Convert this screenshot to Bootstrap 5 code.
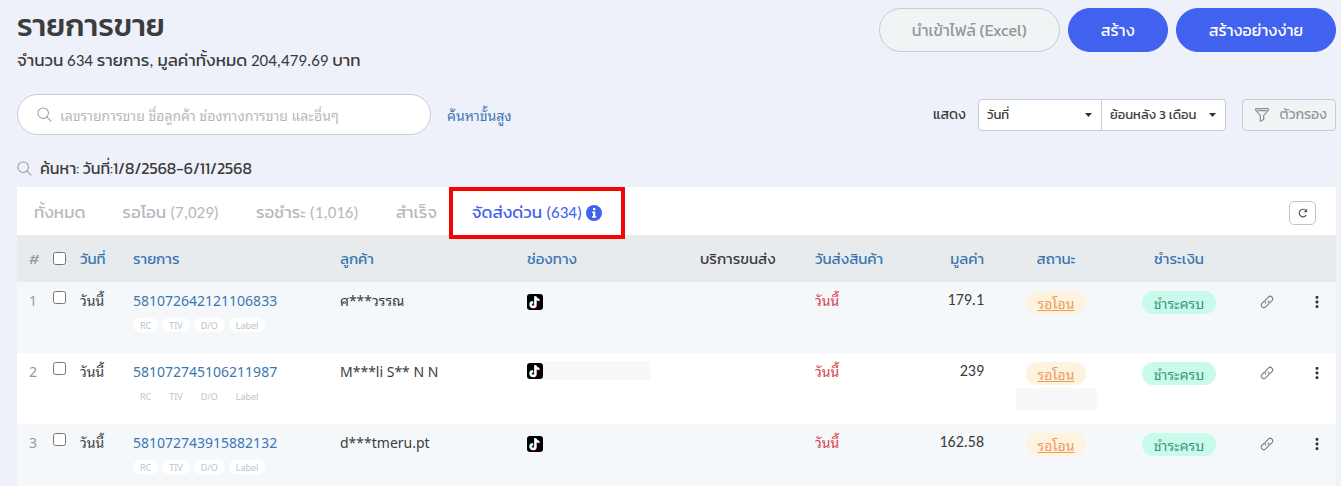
<!DOCTYPE html>
<html lang="th">
<head>
<meta charset="utf-8">
<meta name="viewport" content="width=device-width, initial-scale=1">
<title>รายการขาย</title>
<link href="https://cdn.jsdelivr.net/npm/bootstrap@5.3.0/dist/css/bootstrap.min.css" rel="stylesheet">
<style>
:root{--head:Kanit,"Noto Sans Thai","Noto Sans",sans-serif;--mix:Carlito,Lato,Kanit,"Noto Sans Thai","Noto Sans",sans-serif;--loop:"Noto Sans Thai Looped","Noto Sans",sans-serif}
body{background:#eef1fa;color:#3c3c3c;font-family:var(--loop);font-size:14px;line-height:20px}
a{color:#3a76b1;text-decoration:none}
.page{padding:8px 5px 0 17px}
.page-title{font-family:var(--head);font-size:31px;line-height:34px;font-weight:500;margin:0 0 8px}
.summary{font-family:var(--mix);font-size:17px;line-height:22px}
.pill-btn{height:44px;border-radius:22px;font-family:var(--head);font-size:16px;line-height:20px;padding:0 32px}
.btn-plain{background:#f1f4f5;border:1px solid #c8cbd3;color:#92979c;font-family:var(--head)}
.btn-blue{background:#4062ee;border-color:#4062ee;color:#fff}
.tools{margin-top:22px}
.search-box{width:414px;height:41px;border:1px solid #c8cbd3;border-radius:21px;background:#fff;padding:0 19px;gap:8px}
.search-box input{border:0;outline:0;background:none;font-size:14px;color:#3c3c3c;padding:0}
.search-box input::placeholder{color:#b4b8bd;opacity:1}
.show-by{font-family:var(--head)}
.pick{height:32px;border:1px solid #c8cbd3;background:#fff;font-family:var(--head);font-size:13px;color:#3c3c3c;appearance:none;padding:0 24px 0 8px;width:124px}
.pick-wrap{position:relative}
.pick-wrap svg{position:absolute;right:10px;top:14px;pointer-events:none}
.pick-first{border-radius:4px 0 0 4px}
.pick-last{border-radius:0 4px 4px 0;border-left:0}
.filter-btn{height:32px;width:94px;border-radius:4px;font-size:14px;padding:0 8px 0 12px}
.found{font-family:var(--head);font-size:16px;line-height:22px;margin:22px 0 8px}
.panel{background:#fff}
.tabs{height:48px;padding:3px 20px 0 17px;font-family:var(--mix)}
.tabs a{font-size:17px;color:#b5b9be;margin-right:37px}
.tabs a:nth-child(4){margin-right:12px}
.tabs .tab-now{height:52px;width:176px;border:4px solid #f40505;color:#4062ee;margin:0;position:relative;z-index:1}
.reload{width:27px;height:24px;border:1px solid #c4c4c8;border-radius:5px;background:#fff;padding:0}
.sales{width:100%;table-layout:fixed;border-collapse:collapse}
.sales th{height:47px;background:#e8ebee;font-family:var(--head);font-weight:400;font-size:15px;vertical-align:middle;padding:0}
.sales td{height:71px;vertical-align:top;padding:8px 0 0}
.sales tbody tr{background:#f5f8fb}
.sales tbody tr:nth-child(2){background:#fff}
.sales .num{padding-left:12px;color:#969a9e}
.sales input{width:13px;height:13px;margin:0;display:block;border:1px solid #767676;border-radius:3px}
.sales td input{margin-top:1px}
.sales td:last-child{padding-right:6px}
.no,.who{font-size:14px}
.sales .sum{font-family:Carlito,Lato,sans-serif;font-size:16px}
.late{color:#d9414b}
.chip{font-size:9px;line-height:14px;color:#bcc2c7;background:#fff;border-radius:7px;padding:0 7px}
.state{display:inline-block;height:23px;line-height:23px;border-radius:12px;padding:0 12px;margin-top:1px}
.wait{background:#fef3de;color:#ec9a60;text-decoration:underline}
.paid{background:#c8fbec;color:#3f9377}
.blank{background:#f7f8fa}
.blank-shop{width:107px;height:19px}
.blank-state{width:81px;height:23px;margin-top:3px}
</style>
<script src="https://cdn.jsdelivr.net/npm/bootstrap@5.3.0/dist/js/bootstrap.bundle.min.js"></script>
</head>
<body>
<svg class="d-none">
<symbol id="lens" viewBox="0 0 16 16"><g fill="none" stroke="#9a9fa6" stroke-width="1.1" stroke-linecap="round"><circle cx="6.6" cy="6.6" r="5.6"/><path d="M10.7 10.7 15 15"/></g></symbol>
<symbol id="caret" viewBox="0 0 7 4"><path d="M0 0h7L3.5 4z" fill="#333"/></symbol>
<symbol id="tiktok" viewBox="0 0 16 16"><rect width="16" height="16" rx="3" fill="#000"/><g fill="none" stroke-width="2"><path d="M8.500 2.300v8.200a2.400 2.400 0 1 1-2.400-2.400M8.500 2.300c.2 2.300 1.700 3.400 3.800 3.400" stroke="#25f4ee" transform="translate(-.5 -.2)"/><path d="M8.500 2.300v8.200a2.400 2.400 0 1 1-2.400-2.400M8.500 2.300c.2 2.300 1.700 3.400 3.800 3.400" stroke="#fe2c55" transform="translate(.5 .6)"/><path d="M8.500 2.300v8.200a2.400 2.400 0 1 1-2.400-2.400M8.500 2.300c.2 2.300 1.700 3.400 3.800 3.400" stroke="#fff" transform="translate(0 .2)"/></g></symbol>
<symbol id="chain" viewBox="0 0 16 16"><g fill="none" stroke="#777" stroke-width="1.200" stroke-linecap="round"><path d="M6.700 9.300a2.900 2.900 0 0 1 0-4.100l2.900-2.900a2.900 2.900 0 0 1 4.100 4.100l-2.300 2.300"/><path d="M9.300 6.700a2.900 2.900 0 0 1 0 4.100l-2.900 2.900a2.900 2.900 0 0 1-4.100-4.100l2.300-2.300"/></g></symbol>
<symbol id="dots" viewBox="0 0 4 12"><g fill="#333"><rect x=".6" y="0" width="2.800" height="2.800" rx=".8"/><rect x=".6" y="4.600" width="2.800" height="2.800" rx=".8"/><rect x=".6" y="9.200" width="2.800" height="2.800" rx=".8"/></g></symbol>
</svg>
<main class="page vh-100 overflow-hidden">
<header class="d-flex justify-content-between align-items-start">
<div><h1 class="page-title">รายการขาย</h1><div class="summary">จำนวน 634 รายการ, มูลค่าทั้งหมด 204,479.69 บาท</div></div>
<div class="d-flex gap-2">
<button class="btn pill-btn btn-plain">นำเข้าไฟล์ (Excel)</button>
<button class="btn pill-btn btn-blue">สร้าง</button>
<button class="btn pill-btn btn-blue">สร้างอย่างง่าย</button>
</div>
</header>
<div class="tools d-flex justify-content-between align-items-center">
<div class="d-flex align-items-center">
<label class="search-box d-flex align-items-center"><svg width="15" height="15"><use href="#lens"/></svg><input class="flex-grow-1" type="text" aria-label="ค้นหา" placeholder="เลขรายการขาย ชื่อลูกค้า ช่องทางการขาย และอื่นๆ"></label>
<a href="#" class="ms-3">ค้นหาขั้นสูง</a>
</div>
<div class="d-flex align-items-center">
<label for="by" class="show-by me-2">แสดง</label>
<div class="pick-wrap ms-1"><select id="by" class="pick pick-first"><option>วันที่</option></select><svg width="7" height="4"><use href="#caret"/></svg></div>
<div class="pick-wrap"><select class="pick pick-last" aria-label="ช่วงเวลา"><option>ย้อนหลัง 3 เดือน</option></select><svg width="7" height="4"><use href="#caret"/></svg></div>
<button class="btn btn-plain filter-btn ms-3 d-flex align-items-center justify-content-between"><svg width="14" height="14" viewBox="0 0 14 14" fill="none" stroke="#888e94" stroke-width="1.200" stroke-linejoin="round"><path d="M.7.700h12.600v1.600L8.700 7.400v4L5.300 13.300V7.400L.7 2.300zM2.500 2.700h9"/></svg>ตัวกรอง</button>
</div>
</div>
<div class="found d-flex align-items-center gap-2"><svg width="15" height="15"><use href="#lens"/></svg>ค้นหา: วันที่:1/8/2568-6/11/2568</div>
<section class="panel">
<nav class="tabs d-flex align-items-center">
<a href="#">ทั้งหมด</a><a href="#">รอโอน (7,029)</a><a href="#">รอชำระ (1,016)</a><a href="#">สำเร็จ</a>
<a href="#" class="tab-now d-flex align-items-center justify-content-center gap-1">จัดส่งด่วน (634)<svg width="16" height="16" viewBox="0 0 16 16"><circle cx="8" cy="8" r="8" fill="#4062ee"/><path d="M7 3h2.300v2.200H7zM6.200 6.500h3.100v4.700h1v1.500H6v-1.500h1V8h-.8z" fill="#fff"/></svg></a>
<button class="reload ms-auto d-flex align-items-center justify-content-center" aria-label="โหลดใหม่"><svg width="10" height="10" viewBox="0 0 10 10"><path d="M8.200 7.200A3.800 3.800 0 1 1 7.900 2.500" fill="none" stroke="#555" stroke-width="1.200"/><path d="M9.200.700v3.600H5.700z" fill="#555"/></svg></button>
</nav>
<table class="sales">
<colgroup><col style="width:36px"><col style="width:27px"><col style="width:53px"><col style="width:207px"><col style="width:187px"><col><col style="width:115px"><col style="width:90px"><col style="width:79px"><col style="width:144px"><col style="width:102px"><col style="width:74px"><col style="width:32px"></colgroup>
<thead><tr><th class="num">#</th><th><input type="checkbox" aria-label="เลือกทั้งหมด"></th><th><a href="#">วันที่</a></th><th><a href="#">รายการ</a></th><th><a href="#">ลูกค้า</a></th><th><a href="#">ช่องทาง</a></th><th>บริการขนส่ง</th><th><a href="#">วันส่งสินค้า</a></th><th class="text-end"><a href="#">มูลค่า</a></th><th class="text-center"><a href="#">สถานะ</a></th><th class="text-center"><a href="#">ชำระเงิน</a></th><th></th><th></th></tr></thead>
<tbody>
<tr><td class="num">1</td><td><input type="checkbox" aria-label="เลือก 1"></td><td>วันนี้</td><td><a href="#" class="no">581072642121106833</a><div class="d-flex gap-1 mt-2"><span class="chip">RC</span><span class="chip">TIV</span><span class="chip">D/O</span><span class="chip">Label</span></div></td><td class="who">ศ***วรรณ</td><td><svg width="16" height="16"><use href="#tiktok"/></svg></td><td></td><td class="late">วันนี้</td><td class="sum text-end">179.1</td><td class="text-center"><a href="#" class="state wait">รอโอน</a></td><td class="text-center"><span class="state paid">ชำระครบ</span></td><td class="text-center"><svg width="14" height="14"><use href="#chain"/></svg></td><td class="text-center"><svg width="4" height="12"><use href="#dots"/></svg></td></tr>
<tr><td class="num">2</td><td><input type="checkbox" aria-label="เลือก 2"></td><td>วันนี้</td><td><a href="#" class="no">581072745106211987</a><div class="d-flex gap-1 mt-2"><span class="chip">RC</span><span class="chip">TIV</span><span class="chip">D/O</span><span class="chip">Label</span></div></td><td class="who">M***li S** N N</td><td><div class="d-flex align-items-center"><svg width="16" height="16"><use href="#tiktok"/></svg><span class="blank blank-shop"></span></div></td><td></td><td class="late">วันนี้</td><td class="sum text-end">239</td><td class="text-center"><a href="#" class="state wait">รอโอน</a><div class="blank blank-state mx-auto"></div></td><td class="text-center"><span class="state paid">ชำระครบ</span></td><td class="text-center"><svg width="14" height="14"><use href="#chain"/></svg></td><td class="text-center"><svg width="4" height="12"><use href="#dots"/></svg></td></tr>
<tr><td class="num">3</td><td><input type="checkbox" aria-label="เลือก 3"></td><td>วันนี้</td><td><a href="#" class="no">581072743915882132</a><div class="d-flex gap-1 mt-2"><span class="chip">RC</span><span class="chip">TIV</span><span class="chip">D/O</span><span class="chip">Label</span></div></td><td class="who">d***tmeru.pt</td><td><svg width="16" height="16"><use href="#tiktok"/></svg></td><td></td><td class="late">วันนี้</td><td class="sum text-end">162.58</td><td class="text-center"><a href="#" class="state wait">รอโอน</a></td><td class="text-center"><span class="state paid">ชำระครบ</span></td><td class="text-center"><svg width="14" height="14"><use href="#chain"/></svg></td><td class="text-center"><svg width="4" height="12"><use href="#dots"/></svg></td></tr>
</tbody>
</table>
</section>
</main>
</body>
</html>
